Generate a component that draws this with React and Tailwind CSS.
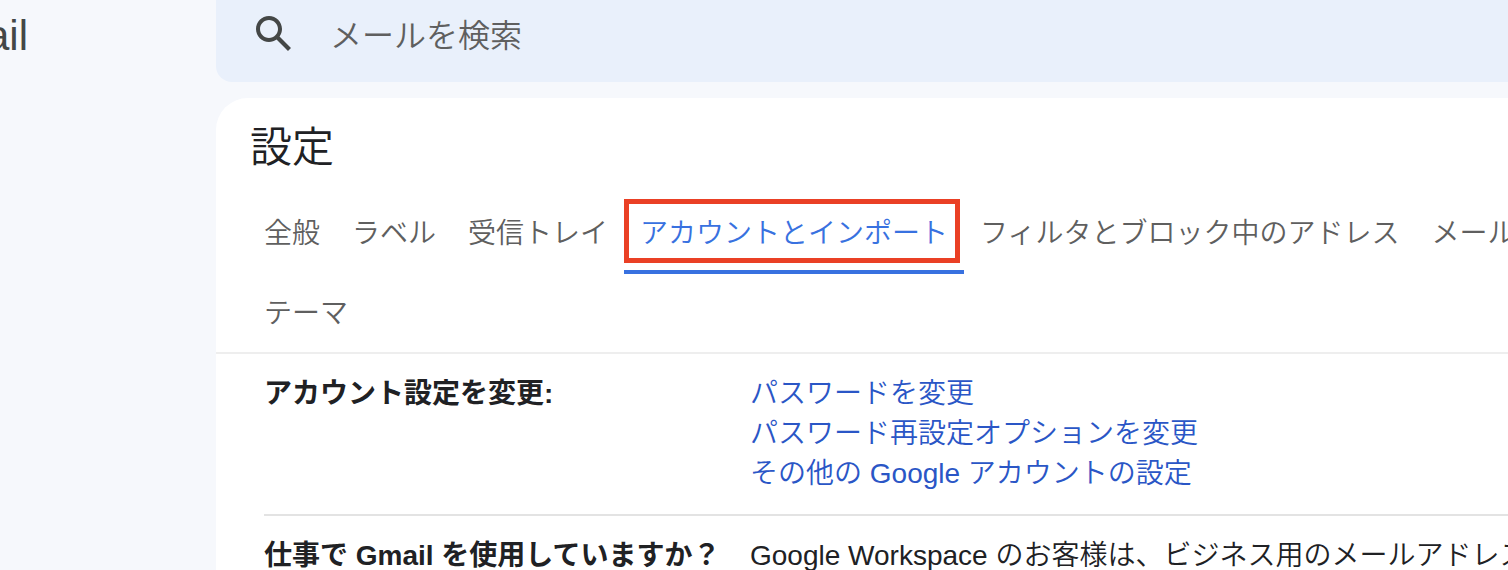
import React, { useState } from 'react';

const tabRows = [
    ["全般", "ラベル", "受信トレイ", "アカウントとインポート", "フィルタとブロック中のアドレス", "メール"],
    ["テーマ"],
];

const accountLinks = [
    "パスワードを変更",
    "パスワード再設定オプションを変更",
    "その他の Google アカウントの設定",
];

const SearchBar = () => {
    const [query, setQuery] = useState("");

    return (
        <form
            role="search"
            onSubmit={(e) => e.preventDefault()}
            className="flex h-[82px] shrink-0 items-start rounded-bl-2xl bg-[#e9f0fb] pl-[34px]"
        >
            <button type="submit" aria-label="検索" className="mt-2.5 shrink-0 text-[#444746]">
                <svg viewBox="0 0 24 24" className="size-12" fill="currentColor">
                    <path d="M20.49 19l-5.73-5.73C15.53 12.2 16 10.91 16 9.5 16 5.91 13.09 3 9.5 3S3 5.91 3 9.5 5.91 16 9.5 16c1.41 0 2.7-.47 3.77-1.24L19 20.49 20.49 19zM5 9.5C5 7.01 7.01 5 9.5 5S14 7.01 14 9.5 11.99 14 9.5 14 5 11.99 5 9.5z" />
                </svg>
            </button>
            <input
                type="text"
                aria-label="メールを検索"
                placeholder="メールを検索"
                value={query}
                onChange={(e) => setQuery(e.target.value)}
                className="ml-8 mt-3 h-12 min-w-0 flex-1 bg-transparent text-[32px] text-[#1f1f1f] outline-none placeholder:text-[#5f5f5f]"
            />
        </form>
    );
};

const Tab = ({ label, active, onClick }) => (
    <button
        type="button"
        role="tab"
        aria-selected={active}
        onClick={onClick}
        className={`relative h-20 shrink-0 whitespace-nowrap border-b-4 px-4 pt-1 leading-10 ${
            active ? "border-[#3871e0] text-[#3871e0]" : "border-transparent text-[#5f5f5f]"
        }`}
    >
        {label}
        {active && <span className="absolute left-0 right-1 top-[5px] h-16 border-[5px] border-[#ea4025]" />}
    </button>
);

const SettingRow = ({ title, children }) => (
    <div className="flex border-b-2 border-[#e3e3e3] py-5 leading-10">
        <h2 className="w-[486px] shrink-0 whitespace-nowrap font-bold">{title}</h2>
        <div className="min-w-0 flex-1 overflow-hidden whitespace-nowrap">{children}</div>
    </div>
);

const App = () => {
    const [activeTab, setActiveTab] = useState("アカウントとインポート");

    return (
        <div className="flex h-screen overflow-hidden bg-[#f6f8fc] font-['Liberation_Sans','Noto_Sans_CJK_JP',sans-serif] text-[28px] font-[350] text-[#202124]">
            <aside className="w-54 shrink-0">
                <div className="flex w-7 justify-end overflow-hidden pt-3 text-[42px] leading-12 text-[#444746]">
                    Gmail
                </div>
            </aside>

            <div className="flex min-w-0 flex-1 flex-col gap-4">
                <SearchBar />

                <main className="flex-1 overflow-hidden rounded-tl-[32px] bg-white">
                    <h1 className="px-[34px] pt-5 text-[42px] leading-15">設定</h1>

                    <div role="tablist" className="mt-4 border-b-2 border-[#eeeeee] pl-8">
                        <div className="-mb-0.5">
                            {tabRows.map((row, i) => (
                                <div key={i} className="flex overflow-hidden">
                                    {row.map((label) => (
                                        <Tab
                                            key={label}
                                            label={label}
                                            active={label === activeTab}
                                            onClick={() => setActiveTab(label)}
                                        />
                                    ))}
                                </div>
                            ))}
                        </div>
                    </div>

                    <div className="pl-12">
                        <SettingRow title="アカウント設定を変更:">
                            {accountLinks.map((text) => (
                                <a key={text} href="#" className="block text-[#2a56c6]">
                                    {text}
                                </a>
                            ))}
                        </SettingRow>
                        <SettingRow title="仕事で Gmail を使用していますか？">
                            Google Workspace のお客様は、ビジネス用のメールアドレス
                        </SettingRow>
                    </div>
                </main>
            </div>
        </div>
    );
};

export default App;
